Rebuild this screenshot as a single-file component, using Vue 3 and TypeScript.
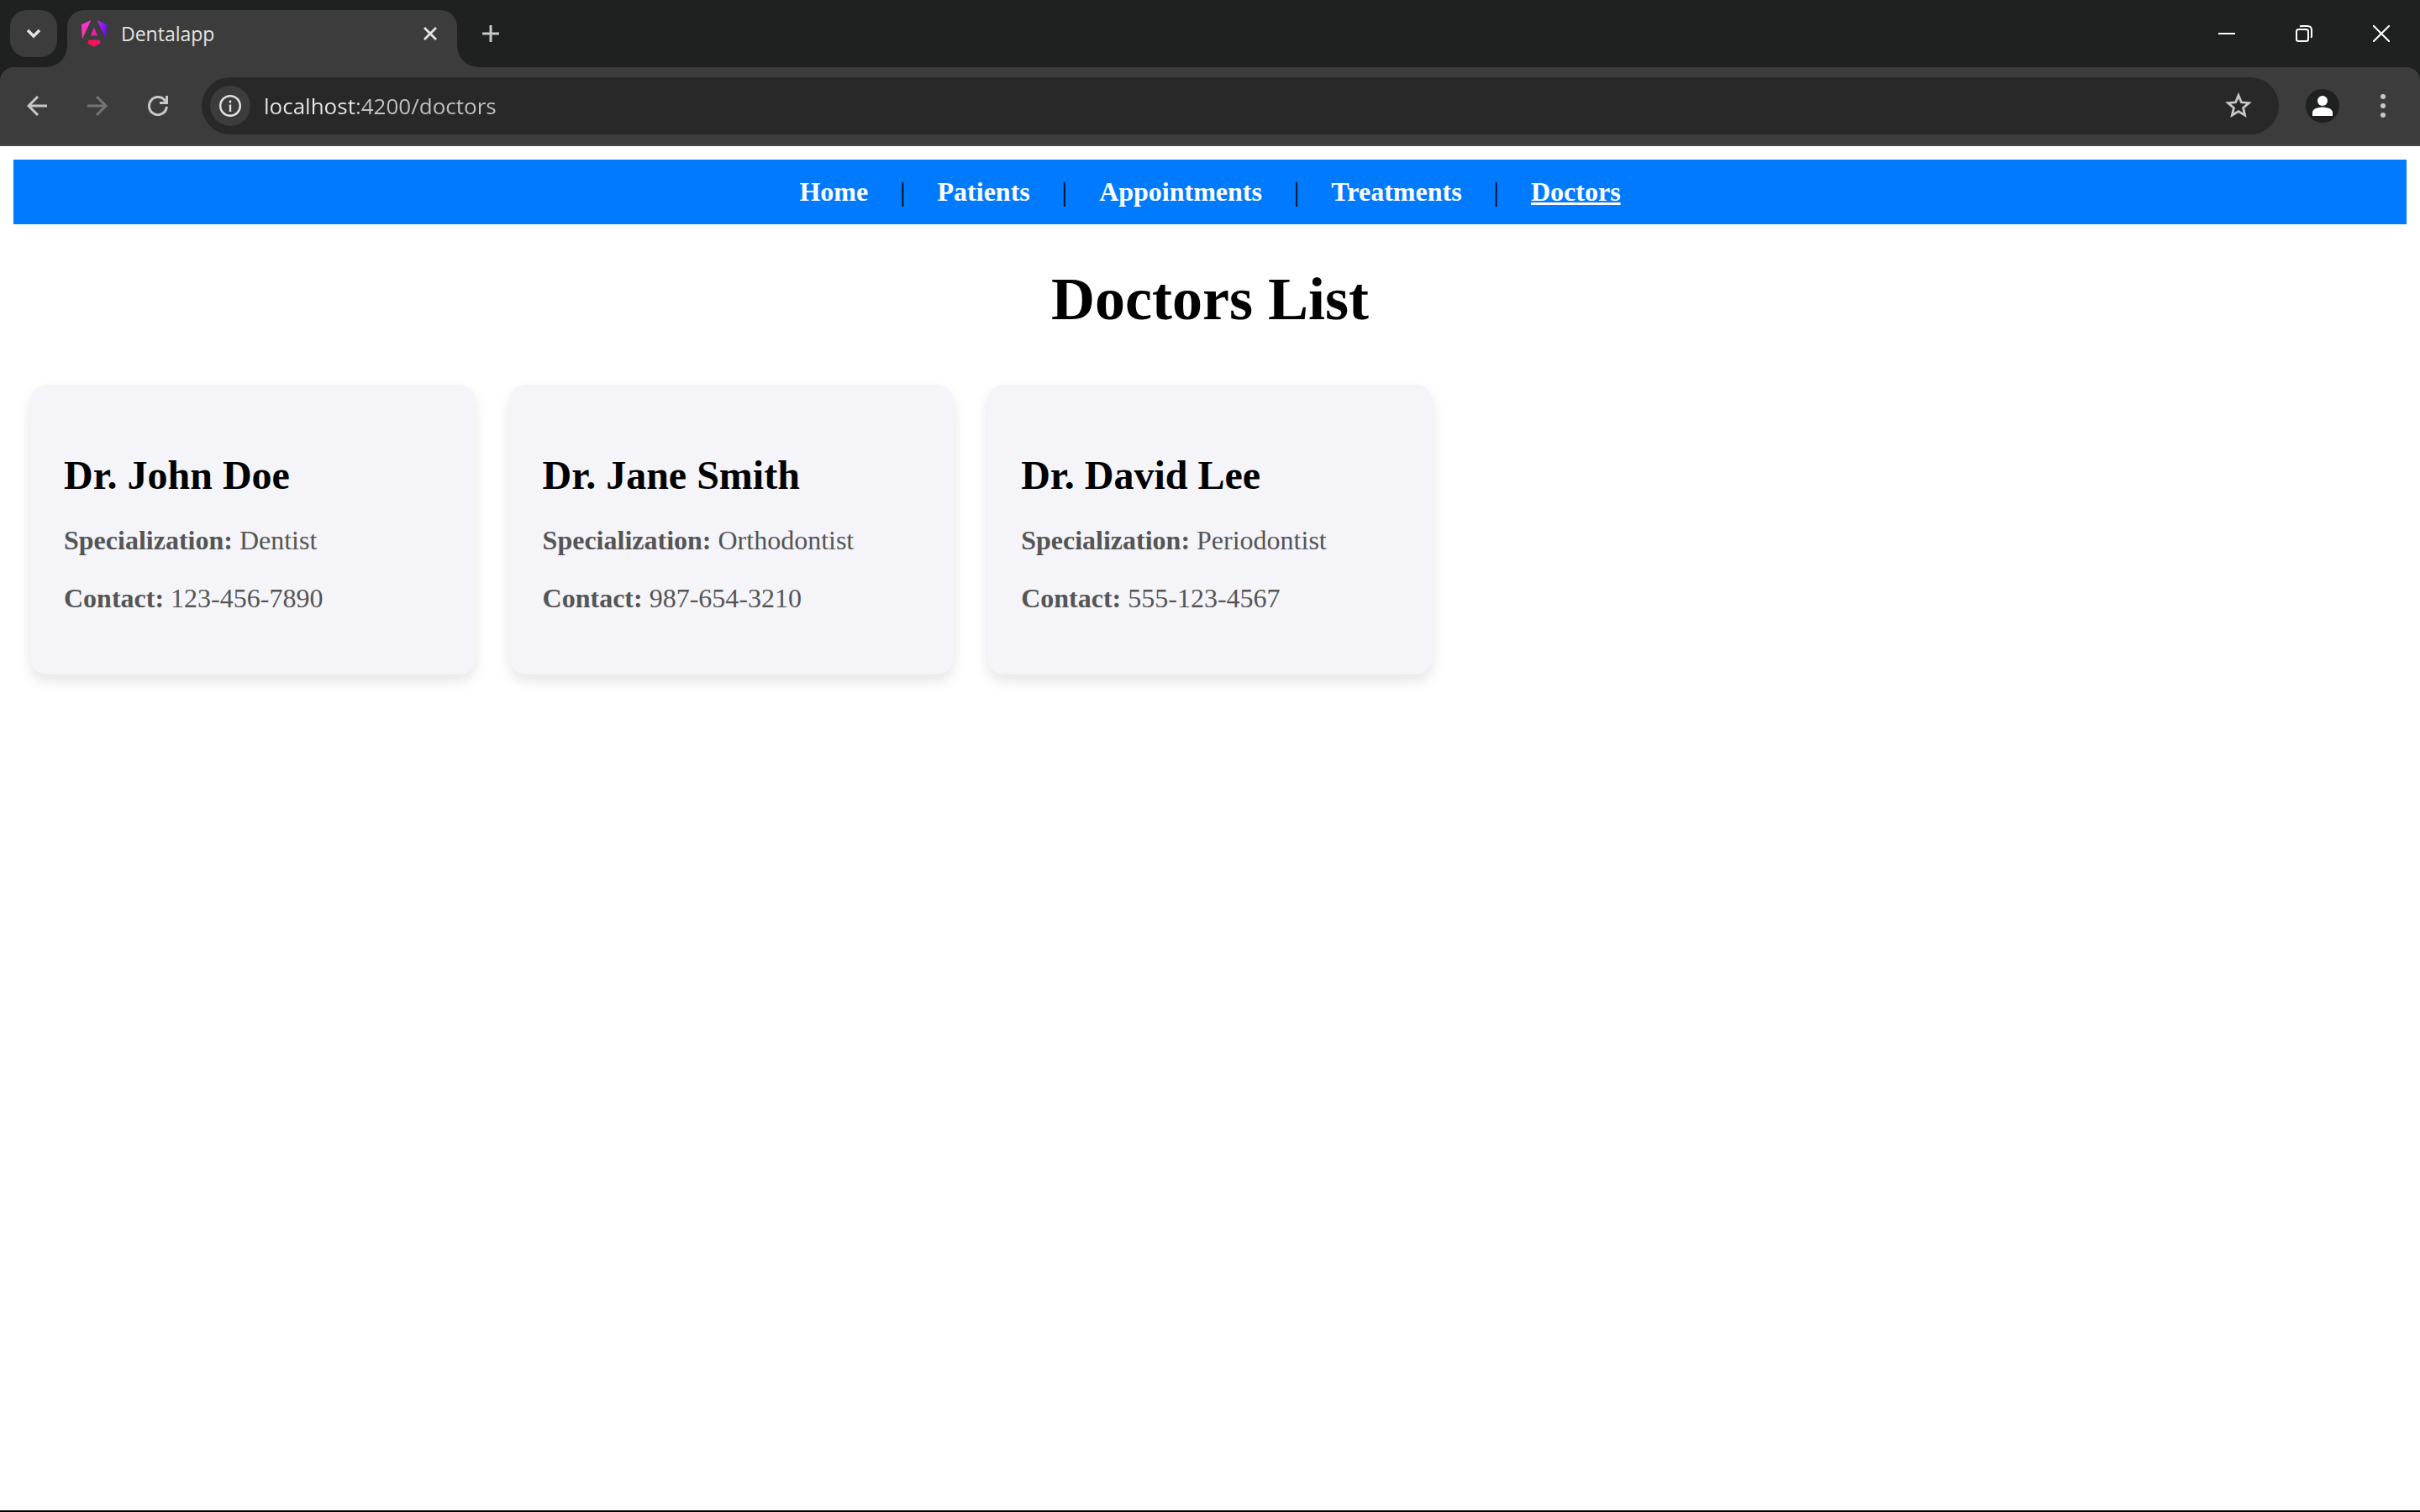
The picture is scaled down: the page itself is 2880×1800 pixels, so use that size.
<script setup lang="ts">
import { ref } from 'vue'

interface Doctor {
  name: string
  specialization: string
  contact: string
}

const address = ref('localhost:4200/doctors')
const active = 'Doctors'
const links: string[] = ['Home', 'Patients', 'Appointments', 'Treatments', 'Doctors']
const doctors: Doctor[] = [
  { name: 'Dr. John Doe', specialization: 'Dentist', contact: '123-456-7890' },
  { name: 'Dr. Jane Smith', specialization: 'Orthodontist', contact: '987-654-3210' },
  { name: 'Dr. David Lee', specialization: 'Periodontist', contact: '555-123-4567' },
]
</script>

<template>
  <div class="window">
    <header class="chrome">
      <div class="strip">
        <button class="tab-search" aria-label="Search tabs">
          <svg width="20" height="20" viewBox="0 0 20 20"><path d="M3 6l7 7 7-7" fill="none" stroke="#e3e3e3" stroke-width="3.4" /></svg>
        </button>
        <div class="tab">
          <svg class="favicon" width="32" height="32" viewBox="0 0 223 236">
            <defs>
              <linearGradient id="wing-left" x1="0" y1="0" x2="0.5" y2="1">
                <stop offset="0" stop-color="#fb2fe6" />
                <stop offset="1" stop-color="#fa3c9a" />
              </linearGradient>
              <linearGradient id="wing-right" x1="0" y1="0" x2="1" y2="0.6">
                <stop offset="0" stop-color="#b62ff0" />
                <stop offset="1" stop-color="#6a0cf0" />
              </linearGradient>
              <linearGradient id="base" x1="0" y1="0" x2="1" y2="0">
                <stop offset="0" stop-color="#ff1248" />
                <stop offset="1" stop-color="#f5106c" />
              </linearGradient>
            </defs>
            <path fill="url(#wing-right)" d="m222.077 39.192-8.019 125.923L137.387 0l84.69 39.192Z" />
            <path fill="url(#base)" d="m168.972 202.017-57.933 33.056-57.934-33.056 11.783-28.556h92.301l11.783 28.556Z" />
            <path fill="#e91fa8" d="m111.039 62.675 30.357 73.803H80.681l30.358-73.803Z" />
            <path fill="url(#wing-left)" d="M7.937 165.115 0 39.192 84.69 0 7.937 165.115Z" />
          </svg>
          <span class="tab-title">Dentalapp</span>
          <button class="tab-close" aria-label="Close tab">
            <svg width="16" height="16" viewBox="0 0 16 16"><path d="M1 1l14 14M15 1L1 15" stroke="#e3e3e3" stroke-width="2.8" /></svg>
          </button>
        </div>
        <button class="new-tab" aria-label="New tab">
          <svg width="20" height="20" viewBox="0 0 20 20"><path d="M10 0v20M0 10h20" stroke="#c7c7c7" stroke-width="3" /></svg>
        </button>
        <div class="controls">
          <button aria-label="Minimize">
            <svg width="20" height="20" viewBox="0 0 20 20"><path d="M0 10h20" stroke="#fff" stroke-width="2" /></svg>
          </button>
          <button aria-label="Restore">
            <svg width="20" height="20" viewBox="0 0 20 20" fill="none" stroke="#fff" stroke-width="2"><rect x="1" y="5" width="14" height="14" rx="2.5" /><path d="M5 1.6Q6 1 7 1h7q5 0 5 5v7q0 1-.8 2" /></svg>
          </button>
          <button aria-label="Close">
            <svg width="20" height="20" viewBox="0 0 20 20"><path d="M0 0l20 20M20 0L0 20" stroke="#fff" stroke-width="2" /></svg>
          </button>
        </div>
      </div>

      <div class="toolbar">
        <div class="group">
          <button aria-label="Back">
            <svg width="24" height="24" viewBox="0 0 24 24" fill="none" stroke="#c7c7c7" stroke-width="3"><path d="M24 12H2M13 1L2 12l11 11" /></svg>
          </button>
          <button aria-label="Forward">
            <svg width="24" height="24" viewBox="0 0 24 24" fill="none" stroke="#757575" stroke-width="3"><path d="M0 12h22M11 1l11 11-11 11" /></svg>
          </button>
          <button aria-label="Reload">
            <svg width="24" height="24" viewBox="0 0 24 24" fill="none" stroke="#c7c7c7" stroke-width="3"><path d="M22.4 13A10.5 10.5 0 1 1 20.5 6L22 8.500" /><path d="M22.500 0v8.500H14" /></svg>
          </button>
        </div>
        <div class="omnibox">
          <button class="site-info" aria-label="View site information">
            <svg width="26" height="26" viewBox="0 0 26 26"><circle cx="13" cy="13" r="11.8" fill="none" stroke="#e3e3e3" stroke-width="2.4" /><path d="M13 11.500v8.500M13 6.500v3" stroke="#e3e3e3" stroke-width="2.4" /></svg>
          </button>
          <input v-model="address" class="address" type="text" aria-label="Address" spellcheck="false" />
          <button class="bookmark" aria-label="Bookmark this tab">
            <svg width="32" height="32" viewBox="0 0 32 32"><path d="M16 3.500l3.400 8.300 9 .8-6.800 5.900 2 8.700-7.600-4.600-7.600 4.600 2-8.700-6.800-5.900 9-.8z" fill="none" stroke="#c7c7c7" stroke-width="2.8" /></svg>
          </button>
        </div>
        <div class="group">
          <button aria-label="Profile">
            <svg width="40" height="40" viewBox="0 0 40 40"><circle cx="20" cy="20" r="20" fill="#1f2120" /><circle cx="20" cy="14" r="6" fill="#fff" /><path d="M8 32v-4q0-3 4-5 8-3 16 0 4 2 4 5v4z" fill="#fff" /></svg>
          </button>
          <button aria-label="Menu">
            <svg width="8" height="28" viewBox="0 0 8 28" fill="#c7c7c7"><circle cx="4" cy="3" r="3" /><circle cx="4" cy="14" r="3" /><circle cx="4" cy="25" r="3" /></svg>
          </button>
        </div>
      </div>
    </header>

    <div class="page">
      <nav class="nav">
        <template v-for="(link, i) in links" :key="link">
          <span v-if="i > 0" class="divider">|</span>
          <a href="#" :class="{ active: link === active }">{{ link }}</a>
        </template>
      </nav>
      <main>
        <h1>Doctors List</h1>
        <div class="cards">
          <article v-for="doctor in doctors" :key="doctor.name" class="card">
            <h2>{{ doctor.name }}</h2>
            <p><strong>Specialization:</strong> {{ doctor.specialization }}</p>
            <p><strong>Contact:</strong> {{ doctor.contact }}</p>
          </article>
        </div>
      </main>
    </div>
  </div>
</template>

<style scoped>
.window {
  box-sizing: border-box;
  display: flex;
  flex-direction: column;
  min-height: 100vh;
  border-bottom: 2px solid #000;
  background: #fff;
}

button {
  display: flex;
  align-items: center;
  justify-content: center;
  padding: 0;
  border: 0;
  background: none;
}

svg {
  display: block;
  flex: none;
}

.chrome {
  background: #1f2120;
  font-family: 'Open Sans', 'Noto Sans', sans-serif;
}

.strip {
  display: flex;
  align-items: flex-start;
  height: 68px;
  padding: 12px 0 0 12px;
}

.tab-search {
  width: 56px;
  height: 56px;
  margin-right: 12px;
  border-radius: 20px;
  background: #3c3c3c;
}

.tab {
  position: relative;
  box-sizing: border-box;
  display: flex;
  align-items: center;
  width: 464px;
  height: 68px;
  padding: 0 20px 12px 16px;
  border-radius: 20px 20px 0 0;
  background: #3c3c3c;
}

.tab::before,
.tab::after {
  content: '';
  position: absolute;
  bottom: 0;
  width: 24px;
  height: 24px;
}

.tab::before {
  right: 100%;
  background: radial-gradient(circle at 0 0, transparent 23px, #3c3c3c 24px);
}

.tab::after {
  left: 100%;
  background: radial-gradient(circle at 100% 0, transparent 23px, #3c3c3c 24px);
}

.tab-title {
  flex: 1;
  margin-left: 16px;
  color: #e3e3e3;
  font-size: 23px;
  line-height: 32px;
}

.tab-close {
  width: 24px;
  height: 24px;
}

.new-tab {
  width: 56px;
  height: 56px;
  margin-left: 12px;
}

.controls {
  display: flex;
  margin-left: auto;
}

.controls button {
  width: 92px;
  height: 56px;
}

.toolbar {
  display: flex;
  align-items: center;
  gap: 24px;
  padding: 12px 16px;
  border-bottom: 2px solid #484848;
  border-radius: 16px 16px 0 0;
  background: #3c3c3c;
}

.group {
  display: flex;
  gap: 16px;
}

.group button {
  width: 56px;
  height: 56px;
}

.omnibox {
  flex: 1;
  display: flex;
  align-items: center;
  height: 68px;
  padding: 0 24px 0 10px;
  border-radius: 34px;
  background: #282828;
}

.site-info {
  width: 48px;
  height: 48px;
  border-radius: 50%;
  background: #3c3c3c;
}

/* The host part of the address is brighter than the port and path. */
.address {
  flex: 1;
  min-width: 0;
  height: 40px;
  margin-left: 16px;
  padding: 0;
  border: 0;
  outline: 0;
  background: linear-gradient(to right, #e8e8e8 110px, #c3c3c3 110px);
  background-clip: text;
  color: transparent;
  font-family: inherit;
  font-size: 26px;
  line-height: 40px;
}

.bookmark {
  width: 48px;
  height: 48px;
}

.page {
  flex: 1;
  padding: 16px;
  color: #000;
  font-family: 'Liberation Serif', 'Times New Roman', serif;
  font-size: 32px;
  line-height: 37px;
}

.nav {
  display: flex;
  justify-content: center;
  gap: 38px;
  padding: 20px;
  background: #007bff;
}

.nav a {
  color: #fff;
  font-weight: bold;
  text-decoration: none;
}

.nav a.active {
  text-decoration: underline;
  text-decoration-thickness: 3px;
}

h1 {
  margin: 48px 0 60px;
  font-size: 72px;
  line-height: 83px;
  text-align: center;
}

.cards {
  display: grid;
  grid-template-columns: repeat(5, 1fr);
  gap: 40px;
  padding: 0 20px;
}

.card {
  padding: 40px;
  border-radius: 20px;
  background: #f4f4f9;
  box-shadow: 0 8px 16px rgba(0, 0, 0, 0.1);
}

h2 {
  margin: 40px 0 32px;
  font-size: 48px;
  line-height: 55px;
}

p {
  margin: 0 0 32px;
  color: #555;
}
</style>
